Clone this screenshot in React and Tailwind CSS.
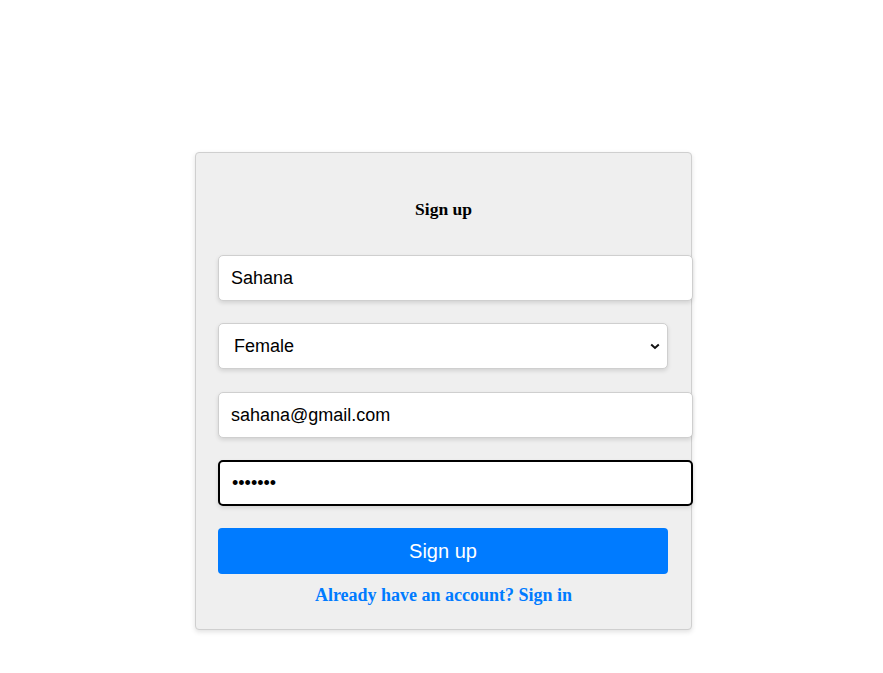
import { useState } from 'react'

export default function App() {
  const [name, setName] = useState('Sahana')
  const [gender, setGender] = useState('Female')
  const [email, setEmail] = useState('sahana@gmail.com')
  const [password, setPassword] = useState('sahana1')

  const inputClass =
    "block h-[46px] rounded-[5px] border border-[#cfcfcf] bg-white px-3 text-[18px] text-black shadow-[0_2px_4px_rgba(0,0,0,0.12)] outline-none font-['Liberation_Sans',Arial,sans-serif]"

  return (
    <div className="min-h-[673px] bg-white pt-[152px] pl-[195px]">
      <div className="w-[497px] rounded-[4px] border border-[#cfcfcf] bg-[#efefef] px-[22px] pb-[24px] pt-[47px] shadow-[0_2px_5px_rgba(0,0,0,0.12)]">
        <h2 className="h-[18px] text-center text-[17.5px] font-bold leading-[18px] text-black font-['Liberation_Serif','Times_New_Roman',serif]">
          Sign up
        </h2>

        <form onSubmit={(e) => e.preventDefault()}>
          <input
            type="text"
            className={`${inputClass} mt-[37px] w-[475px]`}
            value={name}
            onChange={(e) => setName(e.target.value)}
          />

          <div className="relative mt-[22px] w-[450px]">
            <select
              className={`${inputClass} w-[450px] appearance-none pl-[15px] pr-8`}
              value={gender}
              onChange={(e) => setGender(e.target.value)}
            >
              <option>Male</option>
              <option>Female</option>
              <option>Other</option>
            </select>
            {/* chevron */}
            <svg
              className="pointer-events-none absolute right-[8px] top-[20px]"
              width="10"
              height="7"
              viewBox="0 0 10 7"
              fill="none"
            >
              <path d="M1.2 1.5 L5 5 L8.8 1.5" stroke="#111" strokeWidth="2" />
            </svg>
          </div>

          <input
            type="email"
            className={`${inputClass} mt-[23px] w-[475px]`}
            value={email}
            onChange={(e) => setEmail(e.target.value)}
          />

          <input
            type="password"
            className={`${inputClass} mt-[22px] w-[475px] border-2 border-black`}
            value={password}
            onChange={(e) => setPassword(e.target.value)}
          />

          <button
            type="submit"
            className="mt-[22px] block h-[46px] w-[450px] rounded-[4px] bg-[#007bff] text-[20px] text-white font-['Liberation_Sans',Arial,sans-serif]"
          >
            Sign up
          </button>
        </form>

        <p className="mt-[11px] text-center text-[18px] font-bold leading-[20px] text-[#007bff] font-['Liberation_Serif','Times_New_Roman',serif]">
          Already have an account? Sign in
        </p>
      </div>
    </div>
  )
}
